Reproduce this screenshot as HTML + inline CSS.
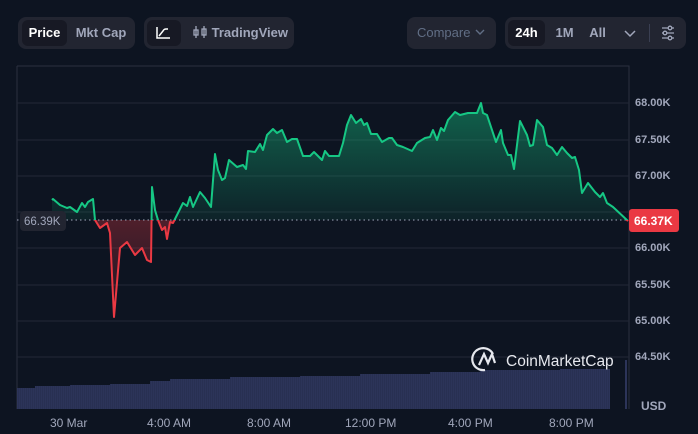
<!DOCTYPE html>
<html><head><meta charset="utf-8"><style>
body{margin:0;width:698px;height:434px;background:#0d1421;font-family:"Liberation Sans",sans-serif;overflow:hidden;position:relative}
.g{position:absolute;top:17px;height:32px;background:#222531;border-radius:8px}
.b{position:absolute;top:3px;height:26px;line-height:26px;font-size:13px;font-weight:bold;color:#a1a7bb;text-align:center}
.a{background:#171924;border-radius:6px;color:#fff}
.yl{position:absolute;left:635px;font-size:11px;color:#a1a7bb;font-weight:bold}
.xl{position:absolute;top:416px;font-size:12px;color:#a1a7bb}
</style></head><body>
<div class="g" style="left:18px;width:117px">
 <div class="b a" style="left:4px;width:45px">Price</div>
 <div class="b" style="left:54px;width:58px">Mkt Cap</div>
</div>
<div class="g" style="left:144px;width:150px">
 <div class="b a" style="left:3px;width:34px"><svg width="34" height="26"><path d="M10 7V18H23M12 16L16 11Q17 9 19 9H21" stroke="#fff" stroke-width="1.5" fill="none"/></svg></div>
 <div class="b" style="left:46px;width:100px"><svg width="16" height="14" style="vertical-align:-2px"><g stroke="#a1a7bb" stroke-width="1.3" fill="none"><path d="M4 1V13M12 1V13"/><rect x="2" y="5" width="4" height="5"/><rect x="10" y="4" width="4" height="6"/></g></svg> TradingView</div>
</div>
<div class="g" style="left:407px;width:89px">
 <div class="b" style="left:0;width:89px;color:#616e85;font-weight:normal">Compare <svg width="12" height="10"><path d="M2 3L6 7L10 3" stroke="#616e85" stroke-width="1.4" fill="none"/></svg></div>
</div>
<div class="g" style="left:505px;width:181px">
 <div class="b a" style="left:3px;width:37px">24h</div>
 <div class="b" style="left:47px;width:25px">1M</div>
 <div class="b" style="left:80px;width:25px">All</div>
 <div class="b" style="left:115px;width:20px"><svg width="14" height="26"><path d="M2 11L7 16L12 11" stroke="#a1a7bb" stroke-width="1.5" fill="none"/></svg></div>
 <div style="position:absolute;left:144px;top:7px;width:1px;height:18px;background:#3a3f52"></div>
 <div class="b" style="left:153px;width:20px"><svg width="16" height="26"><g stroke="#a1a7bb" stroke-width="1.3" fill="#222531"><path d="M2 8H14M2 13H14M2 18H14"/><circle cx="10" cy="8" r="1.8"/><circle cx="5" cy="13" r="1.8"/><circle cx="10" cy="18" r="1.8"/></g></svg></div>
</div>
<svg width="698" height="434" style="position:absolute;left:0;top:0">
<defs>
<linearGradient id="gg" x1="0" y1="100" x2="0" y2="220" gradientUnits="userSpaceOnUse"><stop offset="0" stop-color="#16c784" stop-opacity=".45"/><stop offset="1" stop-color="#16c784" stop-opacity=".08"/></linearGradient>
<linearGradient id="rg" x1="0" y1="220" x2="0" y2="320" gradientUnits="userSpaceOnUse"><stop offset="0" stop-color="#ea3943" stop-opacity=".3"/><stop offset="1" stop-color="#ea3943" stop-opacity=".05"/></linearGradient>
<clipPath id="up"><rect x="0" y="0" width="698" height="220"/></clipPath>
<clipPath id="dn"><rect x="0" y="220" width="698" height="200"/></clipPath>
<pattern id="vp" width="2" height="10" patternUnits="userSpaceOnUse"><rect width="2" height="10" fill="#2c3459"/><rect width="0.6" height="10" fill="#252c4c"/></pattern>
</defs>
<path d="M17 66H629V409" stroke="#2a3040" fill="none"/>
<path d="M17 66V409" stroke="#2a3040"/>
<g stroke="#222836"><path d="M17 103H629M17 140H629M17 176H629M17 212H629M17 248H629M17 285H629M17 321H629M17 357H629"/></g>
<path d="M17 409V388H35V386H70V385H110V384H150V381H170V379H230V377H300V376H360V374H430V372H480V370H560V369H610V409Z" fill="url(#vp)"/>
<rect x="625" y="360" width="2" height="49" fill="#2c3459"/>
<path id="ln" d="M52 200L53 199L60 205L67 208L70 207L77 212L82 203L85 207L88 202L93 199L95 220L100 228L107 223L110 233L114 317L120 248L127 242L135 255L142 248L147 260L151 262L152 187L155 210L158 220L162 230L165 227L167 239L170 222L173 223L177 215L183 203L187 206L190 197L193 207L200 192L205 198L211 207L215 154L218 170L222 180L225 178L229 160L237 167L243 165L246 169L248 151L255 152L260 144L263 150L267 135L273 129L277 133L282 130L287 142L292 139L297 139L303 156L310 156L314 152L322 160L325 151L329 156L339 156L343 143L347 125L351 115L356 123L361 119L364 125L367 123L371 134L377 134L382 142L389 138L392 138L397 145L403 147L412 151L417 143L425 138L430 137L433 130L437 140L441 128L444 131L448 120L455 112L460 115L468 113L477 113L481 103L483 113L487 115L492 130L496 142L501 130L503 143L508 155L511 155L514 169L520 121L527 135L530 146L533 145L537 120L543 127L547 145L552 148L557 155L562 147L567 153L572 158L575 157L579 170L582 193L588 183L595 192L600 197L603 193L607 203L613 207L628 221" fill="none"/>
<path d="M52 200L53 199L60 205L67 208L70 207L77 212L82 203L85 207L88 202L93 199L95 220L100 228L107 223L110 233L114 317L120 248L127 242L135 255L142 248L147 260L151 262L152 187L155 210L158 220L162 230L165 227L167 239L170 222L173 223L177 215L183 203L187 206L190 197L193 207L200 192L205 198L211 207L215 154L218 170L222 180L225 178L229 160L237 167L243 165L246 169L248 151L255 152L260 144L263 150L267 135L273 129L277 133L282 130L287 142L292 139L297 139L303 156L310 156L314 152L322 160L325 151L329 156L339 156L343 143L347 125L351 115L356 123L361 119L364 125L367 123L371 134L377 134L382 142L389 138L392 138L397 145L403 147L412 151L417 143L425 138L430 137L433 130L437 140L441 128L444 131L448 120L455 112L460 115L468 113L477 113L481 103L483 113L487 115L492 130L496 142L501 130L503 143L508 155L511 155L514 169L520 121L527 135L530 146L533 145L537 120L543 127L547 145L552 148L557 155L562 147L567 153L572 158L575 157L579 170L582 193L588 183L595 192L600 197L603 193L607 203L613 207L628 221L628 220L52 220Z" fill="url(#gg)" clip-path="url(#up)"/>
<path d="M95 220L100 228L107 223L110 233L114 317L120 248L127 242L135 255L142 248L147 260L151 262L152 220Z M158 220L162 230L165 227L167 239L170 222L173 223L175 220Z" fill="url(#rg)"/>
<line x1="17" y1="220" x2="629" y2="220" stroke="#a1a7bb" stroke-width="1" stroke-dasharray="1.5 3"/>
<g fill="none" stroke-width="2" stroke-linejoin="round">
<use href="#ln" stroke="#16c784" clip-path="url(#up)"/>
<use href="#ln" stroke="#ea3943" clip-path="url(#dn)"/>
</g>
<rect x="20" y="211" width="46" height="20" rx="4" fill="#222531"/>
<text x="24" y="225" font-size="11.5" fill="#a1a7bb" font-family="Liberation Sans">66.39K</text>
<rect x="629" y="209" width="50" height="23" rx="3" fill="#ea3943"/>
<text x="634" y="225" font-size="12" font-weight="bold" fill="#fff" font-family="Liberation Sans">66.37K</text>
<g stroke="#e6e8ee" stroke-width="2.2" fill="none"><path d="M493 354A11 11 0 1 0 485 370"/><path d="M479 365L484 354L488 363L492 354L495 363"/></g>
<text x="506" y="366" font-size="15.5" fill="#e6e8ee" font-family="Liberation Sans">CoinMarketCap</text>
</svg>
<div class="yl" style="top:97px">68.00K</div>
<div class="yl" style="top:134px">67.50K</div>
<div class="yl" style="top:170px">67.00K</div>
<div class="yl" style="top:242px">66.00K</div>
<div class="yl" style="top:279px">65.50K</div>
<div class="yl" style="top:315px">65.00K</div>
<div class="yl" style="top:351px">64.50K</div>
<div class="yl" style="top:399px;left:641px;font-size:12px">USD</div>
<div class="xl" style="left:50px">30 Mar</div>
<div class="xl" style="left:147px">4:00 AM</div>
<div class="xl" style="left:247px">8:00 AM</div>
<div class="xl" style="left:345px">12:00 PM</div>
<div class="xl" style="left:448px">4:00 PM</div>
<div class="xl" style="left:549px">8:00 PM</div>
</body></html>
